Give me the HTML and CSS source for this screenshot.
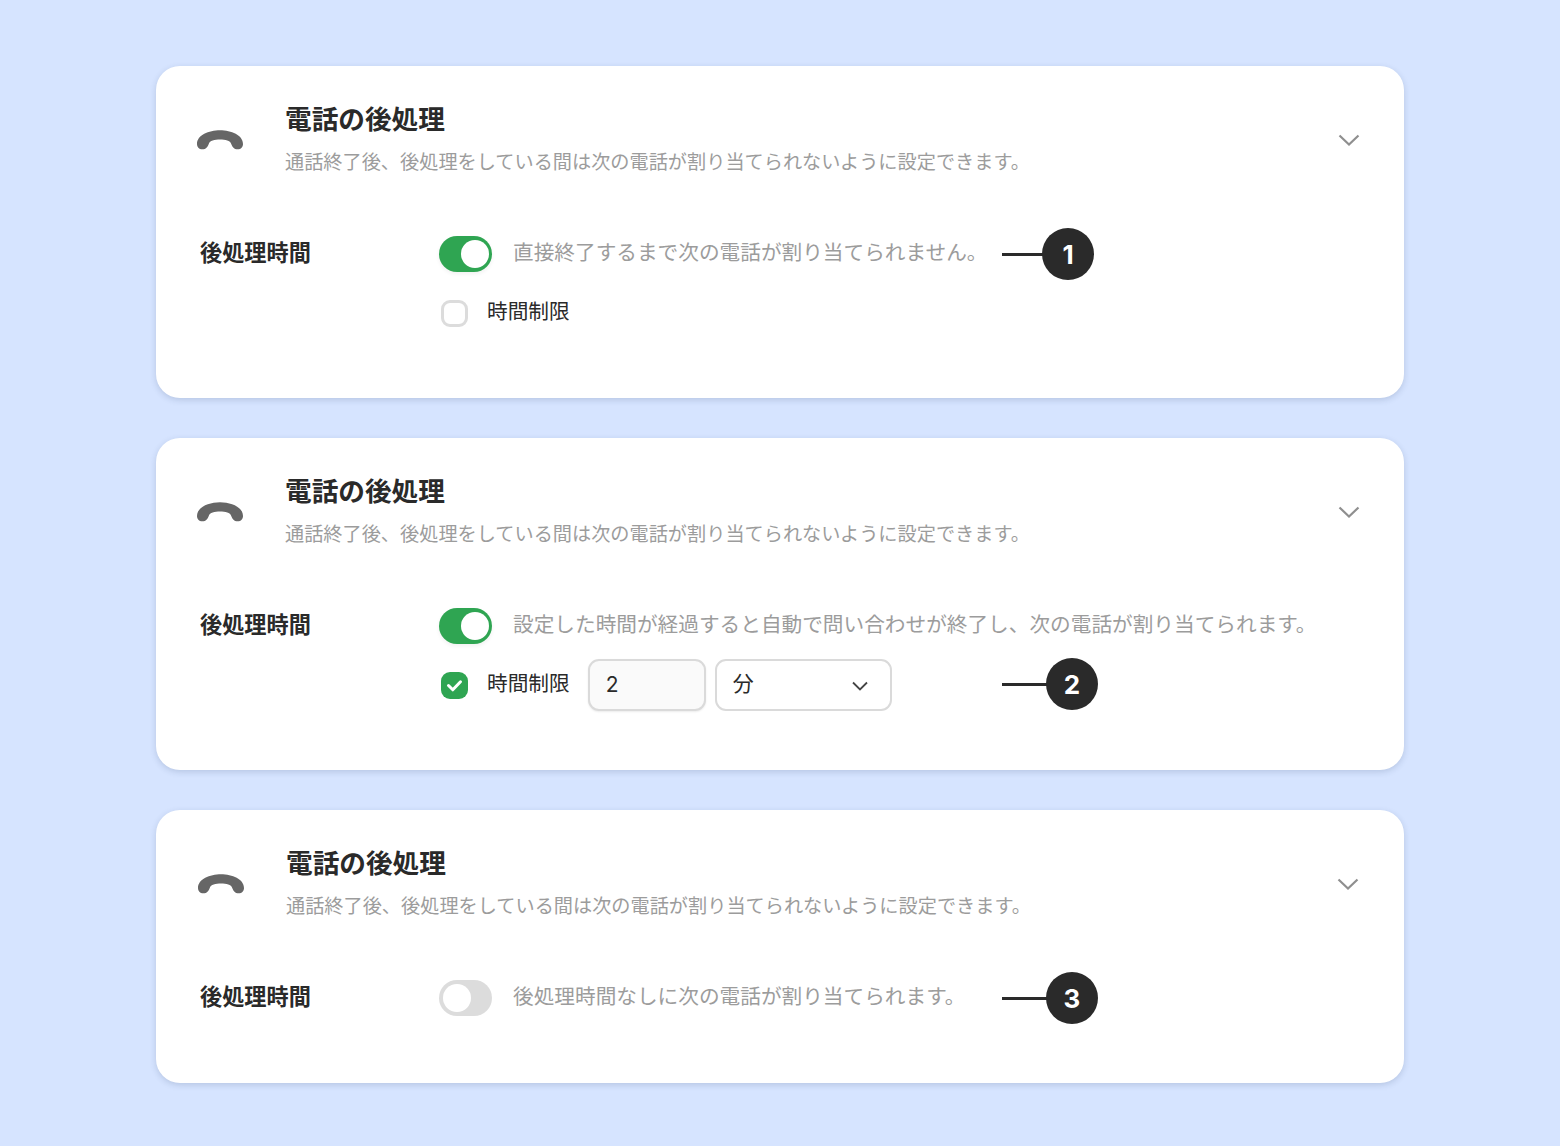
FILE: index.html
```html
<!DOCTYPE html>
<html lang="ja">
<head>
<meta charset="utf-8">
<title>電話の後処理</title>
<link rel="stylesheet" href="styles.css">
</head>
<body>
<main class="stack">

<section class="card">
  <header class="head">
    <svg class="phone" viewBox="0 0 47 20"><path d="M0 14C0 5 12 0 23.5 0S47 5 47 14C47 17 45 19.500 41.500 19.500C38 19.500 36 17 35 14C34 10.500 29 9.500 23.500 9.500S13 10.500 12 14C11 17 9 19.500 5.500 19.500C2 19.500 0 17 0 14Z"/></svg>
    <div class="head-text">
      <h2 class="title">電話の後処理</h2>
      <p class="sub">通話終了後、後処理をしている間は次の電話が割り当てられないように設定できます。</p>
    </div>
    <svg class="chev" viewBox="0 0 22 12"><path d="M1.500 1.500L11 10.500L20.500 1.500"/></svg>
  </header>
  <div class="rows">
    <div class="row">
      <div class="label">後処理時間</div>
      <span class="toggle on"><span class="knob"></span></span>
      <span class="hint">直接終了するまで次の電話が割り当てられません。</span>
    </div>
    <div class="row row-sub">
      <span class="check"></span>
      <span class="check-label">時間制限</span>
    </div>
  </div>
  <div class="callout callout-1"><span class="line"></span><span class="dot">1</span></div>
</section>

<section class="card">
  <header class="head">
    <svg class="phone" viewBox="0 0 47 20"><path d="M0 14C0 5 12 0 23.5 0S47 5 47 14C47 17 45 19.500 41.500 19.500C38 19.500 36 17 35 14C34 10.500 29 9.500 23.500 9.500S13 10.500 12 14C11 17 9 19.500 5.500 19.500C2 19.500 0 17 0 14Z"/></svg>
    <div class="head-text">
      <h2 class="title">電話の後処理</h2>
      <p class="sub">通話終了後、後処理をしている間は次の電話が割り当てられないように設定できます。</p>
    </div>
    <svg class="chev" viewBox="0 0 22 12"><path d="M1.500 1.500L11 10.500L20.500 1.500"/></svg>
  </header>
  <div class="rows">
    <div class="row">
      <div class="label">後処理時間</div>
      <span class="toggle on"><span class="knob"></span></span>
      <span class="hint">設定した時間が経過すると自動で問い合わせが終了し、次の電話が割り当てられます。</span>
    </div>
    <div class="row row-sub">
      <span class="check checked"><svg viewBox="0 0 27 27"><path d="M7.500 13.500L11.800 17.800L19.500 9.800"/></svg></span>
      <span class="check-label">時間制限</span>
      <span class="field">2</span>
      <span class="select">分<svg class="select-chev" viewBox="0 0 16 10"><path d="M1 1.500L8 8.500L15 1.500"/></svg></span>
    </div>
  </div>
  <div class="callout callout-2"><span class="line"></span><span class="dot">2</span></div>
</section>

<section class="card card-short">
  <header class="head">
    <svg class="phone" viewBox="0 0 47 20"><path d="M0 14C0 5 12 0 23.5 0S47 5 47 14C47 17 45 19.500 41.500 19.500C38 19.500 36 17 35 14C34 10.500 29 9.500 23.500 9.500S13 10.500 12 14C11 17 9 19.500 5.500 19.500C2 19.500 0 17 0 14Z"/></svg>
    <div class="head-text">
      <h2 class="title">電話の後処理</h2>
      <p class="sub">通話終了後、後処理をしている間は次の電話が割り当てられないように設定できます。</p>
    </div>
    <svg class="chev" viewBox="0 0 22 12"><path d="M1.500 1.500L11 10.500L20.500 1.500"/></svg>
  </header>
  <div class="rows">
    <div class="row">
      <div class="label">後処理時間</div>
      <span class="toggle off"><span class="knob"></span></span>
      <span class="hint">後処理時間なしに次の電話が割り当てられます。</span>
    </div>
  </div>
  <div class="callout callout-3"><span class="line"></span><span class="dot">3</span></div>
</section>

</main>
</body>
</html>
```
FILE: styles.css
```css
* { box-sizing: border-box; }
html, body { margin: 0; }
body {
  width: 1560px;
  height: 1146px;
  background: #d6e4ff;
  font-family: "Noto Sans CJK JP", "Noto Sans", sans-serif;
  overflow: hidden;
}
.stack {
  display: flex;
  flex-direction: column;
  gap: 40px;
  padding: 66px 156px 0;
}
.card {
  position: relative;
  height: 332px;
  background: #fff;
  border-radius: 24px;
  box-shadow: 0 2px 6px rgba(40, 60, 100, .18);
  padding: 0 44px;
}
.card-short { height: 273px; }
.head {
  display: flex;
  align-items: center;
  height: 148px;
  padding-left: 41px;
  margin-left: -44px;
}
.card-short .head { padding-left: 42px; }
.card-short .chev { margin-right: 1px; }
.phone { width: 46px; height: 20px; fill: #666; flex: none; }
.head-text { margin-left: 42px; flex: 1; padding-bottom: 6px; }
.title {
  margin: 0;
  font-size: 26.67px;
  line-height: 40px;
  font-weight: 700;
  color: #2a2a2a;
}
.sub {
  margin: 8px 0 0;
  font-size: 19.18px;
  line-height: 30px;
  color: #9c9c9c;
}
.chev {
  width: 22px;
  height: 12px;
  flex: none;
  fill: none;
  stroke: #8f8f8f;
  stroke-width: 2.2;
}
.rows {
  display: flex;
  flex-direction: column;
  gap: 7px;
  margin-top: 14px;
}
.row {
  display: flex;
  align-items: center;
  height: 52px;
}
.row-sub { padding-left: 241px; }
.label {
  width: 239px;
  flex: none;
  font-size: 22.2px;
  font-weight: 700;
  color: #2a2a2a;
  line-height: 30px;
  margin-top: -7px;
}
.toggle {
  display: flex;
  align-items: center;
  width: 53px;
  height: 36px;
  border-radius: 18px;
  padding: 0 3px;
  flex: none;
}
.toggle.on { background: #2fa552; justify-content: flex-end; box-shadow: 0 2px 4px rgba(0,0,0,.06); }
.toggle.off { background: #dcdcdc; justify-content: flex-start; padding-left: 4px; }
.knob {
  width: 28px;
  height: 28px;
  border-radius: 50%;
  background: #fff;
}
.hint {
  margin-left: 21px;
  margin-top: -7px;
  font-size: 20.67px;
  line-height: 30px;
  color: #9c9c9c;
  white-space: nowrap;
}
.check {
  display: block;
  width: 27px;
  height: 27px;
  border: 3px solid #dcdcdc;
  border-radius: 9px;
  background: #fff;
  flex: none;
}
.check.checked { background: #2fa552; border: 0; }
.check svg { display: block; width: 27px; height: 27px; fill: none; stroke: #fff; stroke-width: 3; stroke-linecap: round; stroke-linejoin: round; }
.check-label {
  margin-left: 19px;
  margin-top: -7px;
  font-size: 20.67px;
  line-height: 30px;
  color: #2a2a2a;
}
.field {
  display: flex;
  align-items: center;
  width: 118px;
  height: 52px;
  margin-left: 18px;
  padding: 0 0 2px 16px;
  background: #fafafa;
  border: 2px solid #dadada;
  border-radius: 11px;
  font-size: 21px;
  color: #2a2a2a;
  font-family: Inter, "Noto Sans CJK JP", sans-serif;
  box-shadow: 0 1px 2px rgba(0,0,0,.08);
}
.select {
  display: flex;
  align-items: center;
  justify-content: space-between;
  width: 177px;
  height: 52px;
  margin-left: 9px;
  padding: 0 22px 6px 16px;
  background: #fff;
  border: 2px solid #dadada;
  border-radius: 11px;
  font-size: 21px;
  color: #2a2a2a;
}
.select-chev { width: 16px; height: 10px; fill: none; stroke: #444; stroke-width: 1.8; margin-top: 8px; }
.callout {
  position: absolute;
  left: 846px;
  display: flex;
  align-items: center;
  height: 52px;
}
.callout-1 { top: 162px; }
.callout-2 { top: 220px; }
.callout-3 { top: 162px; }
.line { width: 42px; height: 3px; background: #2a2a2a; flex: none; margin-right: -2px; }
.callout-2 .line, .callout-3 .line { width: 46px; }
.dot {
  display: flex;
  align-items: center;
  justify-content: center;
  width: 52px;
  height: 52px;
  border-radius: 50%;
  background: #2a2a2a;
  color: #fff;
  font-family: Inter, sans-serif;
  font-weight: 700;
  font-size: 26px;
  flex: none;
}
```
